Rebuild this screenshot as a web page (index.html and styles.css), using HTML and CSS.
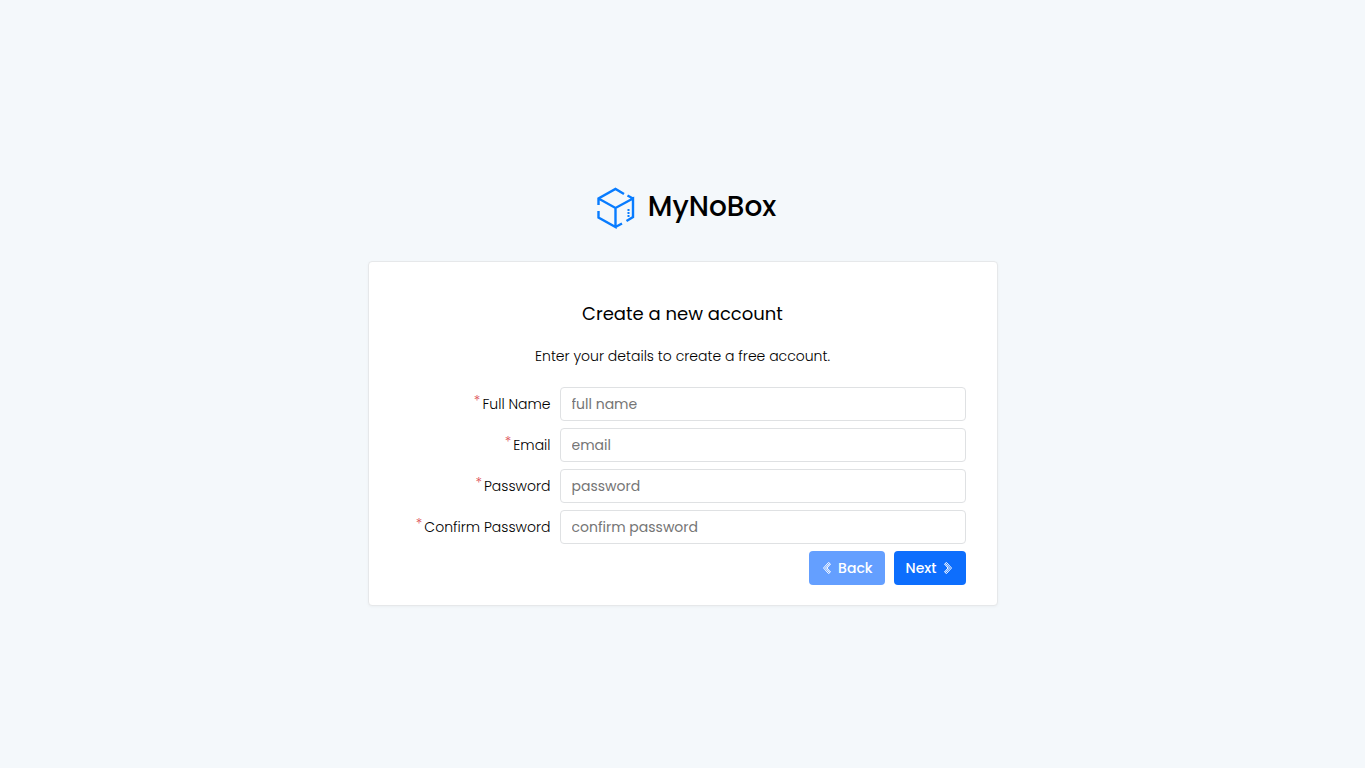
FILE: index.html
```html
<!DOCTYPE html>
<html lang="en">
<head>
<meta charset="utf-8">
<meta name="viewport" content="width=device-width, initial-scale=1">
<title>MyNoBox</title>
<link rel="stylesheet" href="styles.css">
</head>
<body>
<main class="page">
  <div class="brand">
    <svg class="brand-icon" viewBox="0 0 38 42" aria-hidden="true">
      <path d="M27 7 18.500 2 1.500 11.500V18M1.500 11.500 18.500 21 36 11.500V30L29.500 34M30.500 8.500 36 11.500M18.500 21V40L1.500 30.500V24M18.500 40 25 36.500"/>
      <path class="brand-dots" d="M31.500 22V30"/>
    </svg>
    <h1 class="brand-name">MyNoBox</h1>
  </div>
  <section class="card">
    <h2 class="title">Create a new account</h2>
    <p class="intro">Enter your details to create a free account.</p>
    <form class="form">
      <div class="row">
        <label class="label" for="name"><span class="star">*</span>Full Name</label>
        <input class="input" id="name" type="text" placeholder="full name">
      </div>
      <div class="row">
        <label class="label" for="email"><span class="star">*</span>Email</label>
        <input class="input" id="email" type="email" placeholder="email">
      </div>
      <div class="row">
        <label class="label" for="password"><span class="star">*</span>Password</label>
        <input class="input" id="password" type="password" placeholder="password">
      </div>
      <div class="row">
        <label class="label" for="confirm"><span class="star">*</span>Confirm Password</label>
        <input class="input" id="confirm" type="password" placeholder="confirm password">
      </div>
      <div class="actions">
        <button class="button button-back" type="button" disabled>
          <svg class="chevron" viewBox="0 0 12 14" aria-hidden="true"><path d="M7.500 1.500 2.500 7 7.500 12.500 9.500 11 6 7 9.500 3ZM4.500 7 8.500 2.500M4.500 7 8.500 11.500"/></svg>
          Back
        </button>
        <button class="button" type="button">
          Next
          <svg class="chevron" viewBox="0 0 12 14" aria-hidden="true"><path d="M4.500 1.500 9.500 7 4.500 12.500 2.500 11 6 7 2.500 3ZM7.500 7 3.500 2.500M7.500 7 3.500 11.500"/></svg>
        </button>
      </div>
    </form>
  </section>
</main>
</body>
</html>
```
FILE: styles.css
```css
* {
  box-sizing: border-box;
}

body {
  margin: 0;
  background: #f4f8fb;
  color: #000;
  font-family: Poppins, Inter, "Open Sans", sans-serif;
  font-size: 14px;
  line-height: 20px;
}

.page {
  display: flex;
  flex-direction: column;
  align-items: center;
  justify-content: center;
  gap: 32px;
  min-height: 100vh;
  padding: 25px 16px 0;
}

.brand {
  display: flex;
  align-items: center;
  gap: 13px;
  padding-left: 8px;
}

.brand-icon {
  width: 38px;
  height: 42px;
  fill: none;
  stroke: #087cff;
  stroke-width: 2.4;
}

.brand-icon .brand-dots {
  stroke-width: 2;
  stroke-dasharray: 2 1;
}

.brand-name {
  margin: 0 0 2px;
  font-size: 28px;
  font-weight: 500;
  line-height: 36px;
}

.card {
  width: 100%;
  max-width: 630px;
  padding: 40px 31px 20px;
  background: #fff;
  border: 1px solid #e6e8ea;
  border-radius: 4px;
  box-shadow: 0 1px 3px rgba(0, 0, 0, 0.04);
}

.title {
  margin: 0 0 20px;
  font-size: 18px;
  font-weight: 400;
  line-height: 24px;
  text-align: center;
}

.intro {
  margin: 0 0 21px;
  font-weight: 300;
  text-align: center;
}

.form {
  display: flex;
  flex-direction: column;
  gap: 7px;
}

.row {
  display: grid;
  grid-template-columns: 151px 1fr;
  align-items: center;
  gap: 9px;
}

.label {
  display: flex;
  justify-content: flex-end;
  gap: 2px;
  font-weight: 300;
  white-space: nowrap;
}

.star {
  color: #dc4c55;
  font-size: 14px;
  line-height: 14px;
}

.input {
  width: 100%;
  min-width: 0;
  height: 34px;
  padding: 0 11px;
  background: #fff;
  border: 1px solid #dfe1e3;
  border-radius: 4px;
  font: inherit;
}

.input::placeholder {
  color: #757575;
  opacity: 1;
}

.actions {
  display: flex;
  justify-content: flex-end;
  gap: 9px;
}

.button {
  display: flex;
  align-items: center;
  gap: 5px;
  height: 34px;
  padding: 0 12px;
  background: #0d6efd;
  border: 0;
  border-radius: 4px;
  color: #fff;
  font: inherit;
  font-weight: 500;
}

.button-back {
  background: #649fff;
}

.chevron {
  width: 12px;
  height: 14px;
  fill: none;
  stroke: currentColor;
  stroke-width: 1;
}
```
